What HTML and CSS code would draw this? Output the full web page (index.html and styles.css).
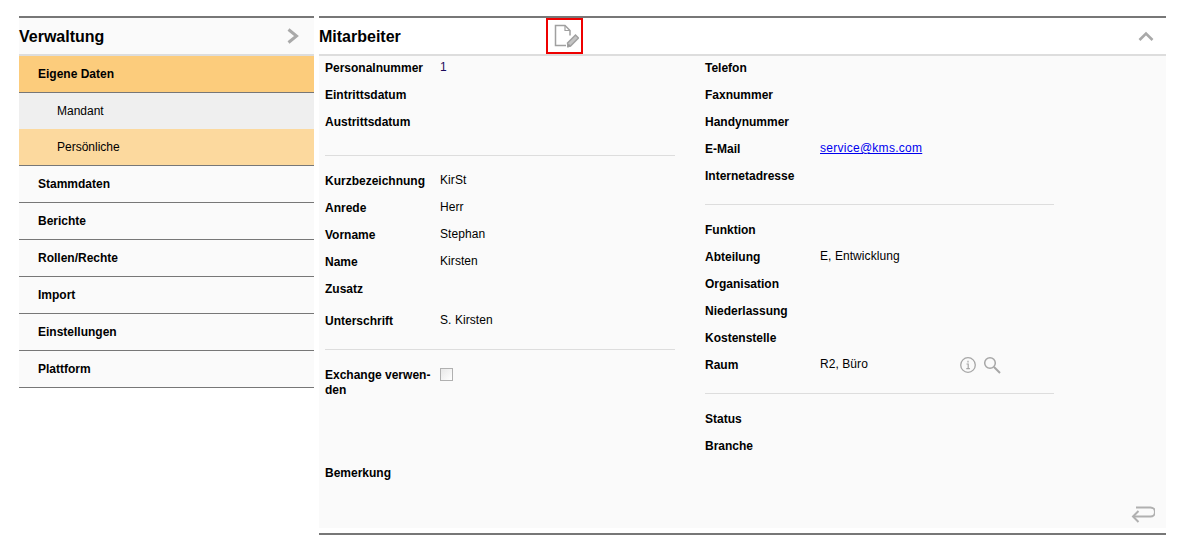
FILE: index.html
```html
<!DOCTYPE html>
<html lang="de">
<head>
<meta charset="utf-8">
<title>Mitarbeiter</title>
<link rel="stylesheet" href="styles.css">
</head>
<body>
<div class="page">
  <aside class="side">
    <header class="head">
      <h2>Verwaltung</h2>
      <svg class="chev" width="14" height="16" viewBox="0 0 14 16"><path d="M2.500 1.500L10.500 8l-8 6.500" fill="none" stroke="#a9a9a9" stroke-width="3"/></svg>
    </header>
    <nav>
      <a class="item active">Eigene Daten</a>
      <a class="sub">Mandant</a>
      <a class="sub cur">Persönliche</a>
      <a class="item">Stammdaten</a>
      <a class="item">Berichte</a>
      <a class="item">Rollen/Rechte</a>
      <a class="item">Import</a>
      <a class="item">Einstellungen</a>
      <a class="item">Plattform</a>
    </nav>
  </aside>
  <main class="panel">
    <header class="head">
      <h2 class="title">Mitarbeiter</h2>
      <span class="edit">
        <svg width="26" height="28" viewBox="0 0 26 28" fill="none" stroke="#a0a0a0"><path d="M13 23.500H2.500v-20h9.500l5 5v5" stroke-width="1.500"/><path d="M12 3.500v5h5" stroke-width="1.200"/><path d="M15 24.500l-.5-3.500 8-8 3 3-8 8z" fill="#c4c4c4" stroke-width="1.500"/><path d="M14.500 25l1-3 2 2z" fill="#909090" stroke-width="1"/></svg>
      </span>
      <svg class="up" width="16" height="12" viewBox="0 0 16 12"><path d="M1.500 10L8 3.500l6.500 6.500" fill="none" stroke="#a9a9a9" stroke-width="2.600"/></svg>
    </header>
    <div class="body">
      <div class="cols">
        <section class="col">
          <div class="row"><b>Personalnummer</b><span class="num">1</span></div>
          <div class="row"><b>Eintrittsdatum</b></div>
          <div class="row"><b>Austrittsdatum</b></div>
          <hr class="rule first">
          <div class="row"><b>Kurzbezeichnung</b><span>KirSt</span></div>
          <div class="row"><b>Anrede</b><span>Herr</span></div>
          <div class="row"><b>Vorname</b><span>Stephan</span></div>
          <div class="row"><b>Name</b><span>Kirsten</span></div>
          <div class="row"><b>Zusatz</b></div>
          <div class="row sign"><b>Unterschrift</b><span>S. Kirsten</span></div>
          <hr class="rule">
          <div class="row tall"><b>Exchange verwen-<br>den</b><i class="check"></i></div>
          <div class="row note"><b>Bemerkung</b></div>
        </section>
        <section class="col right">
          <div class="row"><b>Telefon</b></div>
          <div class="row"><b>Faxnummer</b></div>
          <div class="row"><b>Handynummer</b></div>
          <div class="row"><b>E-Mail</b><a class="mail" href="#">service@kms.com</a></div>
          <div class="row"><b>Internetadresse</b></div>
          <hr class="rule">
          <div class="row"><b>Funktion</b></div>
          <div class="row"><b>Abteilung</b><span>E, Entwicklung</span></div>
          <div class="row"><b>Organisation</b></div>
          <div class="row"><b>Niederlassung</b></div>
          <div class="row"><b>Kostenstelle</b></div>
          <div class="row"><b>Raum</b><span class="room">R2, Büro</span>
            <svg class="ico" width="18" height="18" viewBox="0 0 18 18" fill="none" stroke="#a6a6a6"><circle cx="9" cy="9" r="7.300" stroke-width="1.300"/><path d="M9 4.800v1.600M7.500 8h1.700v4.500M7.300 12.700h3.600" stroke-width="1.200"/></svg>
            <svg class="ico" width="18" height="18" viewBox="0 0 18 18" fill="none" stroke="#a6a6a6"><circle cx="7" cy="7" r="5.300" stroke-width="1.500"/><path d="M11 11l6 6" stroke-width="2"/></svg>
          </div>
          <hr class="rule">
          <div class="row"><b>Status</b></div>
          <div class="row"><b>Branche</b></div>
        </section>
      </div>
      <svg class="back" width="24" height="18" viewBox="0 0 24 18" fill="none" stroke="#b0b0b0" stroke-width="2"><path d="M5 1.500h14.500a3.500 3.500 0 0 1 0 9H2"/><path d="M7.500 5L2 10.500 7.500 16"/></svg>
    </div>
  </main>
</div>
</body>
</html>
```
FILE: styles.css
```css
* { box-sizing: border-box; }
html, body { margin: 0; background: #fff; }
body { font-family: "Liberation Sans", Arial, sans-serif; font-size: 12px; color: #000; }
.page { display: flex; gap: 5px; padding: 16px 18px 0 19px; height: 541px; }
.side { width: 295px; flex: none; }
.panel { width: 847px; flex: none; display: flex; flex-direction: column; height: 519px; border-bottom: 2px solid #777; }
.head { height: 40px; border-top: 2px solid #777; border-bottom: 2px solid #ddd; display: flex; align-items: center; position: relative; background: #fff; }
.side .head { background: #fafafa; justify-content: space-between; padding-right: 14px; }
h2 { margin: 2px 0 0; font-size: 16px; font-weight: bold; line-height: 34px; }
.title { width: 227px; }
.edit { width: 37px; height: 36px; border: 2px solid #e00; display: flex; align-items: center; justify-content: center; padding-left: 3px; }
.up { margin-left: auto; margin-right: 12px; }
nav a { display: flex; align-items: center; color: #000; }
.item { height: 37px; padding-left: 19px; font-weight: bold; background: #fafafa; border-bottom: 1px solid #777; }
.item.active { background: #fccc7c; }
.sub { height: 36px; padding-left: 38px; background: #efefef; }
.sub.cur { height: 37px; background: #fcd99e; border-bottom: 1px solid #777; }
.body { height: 472px; background: #fafafa; position: relative; flex: none; }
.cols { display: flex; padding-left: 6px; gap: 30px; }
.col { width: 350px; flex: none; }
.col.right { width: 349px; }
.row { display: flex; height: 27px; line-height: 14px; padding-top: 5px; }
.row b { width: 115px; flex: none; }
.row span, .row a { position: relative; top: -1px; letter-spacing: .07px; }
.num { color: #1a0a5a; }
.row .mail { color: #00e; text-decoration: underline; letter-spacing: .27px; }
.room { width: 139px; flex: none; }
.ico { flex: none; margin: -2px 6px 0 0; }
.rule { border: 0; height: 1px; background: #ddd; margin: 13px 0; }
.rule.first { margin-top: 18px; }
.sign { margin-top: 5px; }
.tall { height: 56px; align-items: flex-start; }
.tall b { line-height: 15px; }
.check { width: 13px; height: 13px; border: 1px solid #b0b0b0; background: linear-gradient(135deg, #e8e8e8, #fff); }
.note { margin-top: 42px; }
.back { position: absolute; right: 11px; bottom: 4px; }
```
